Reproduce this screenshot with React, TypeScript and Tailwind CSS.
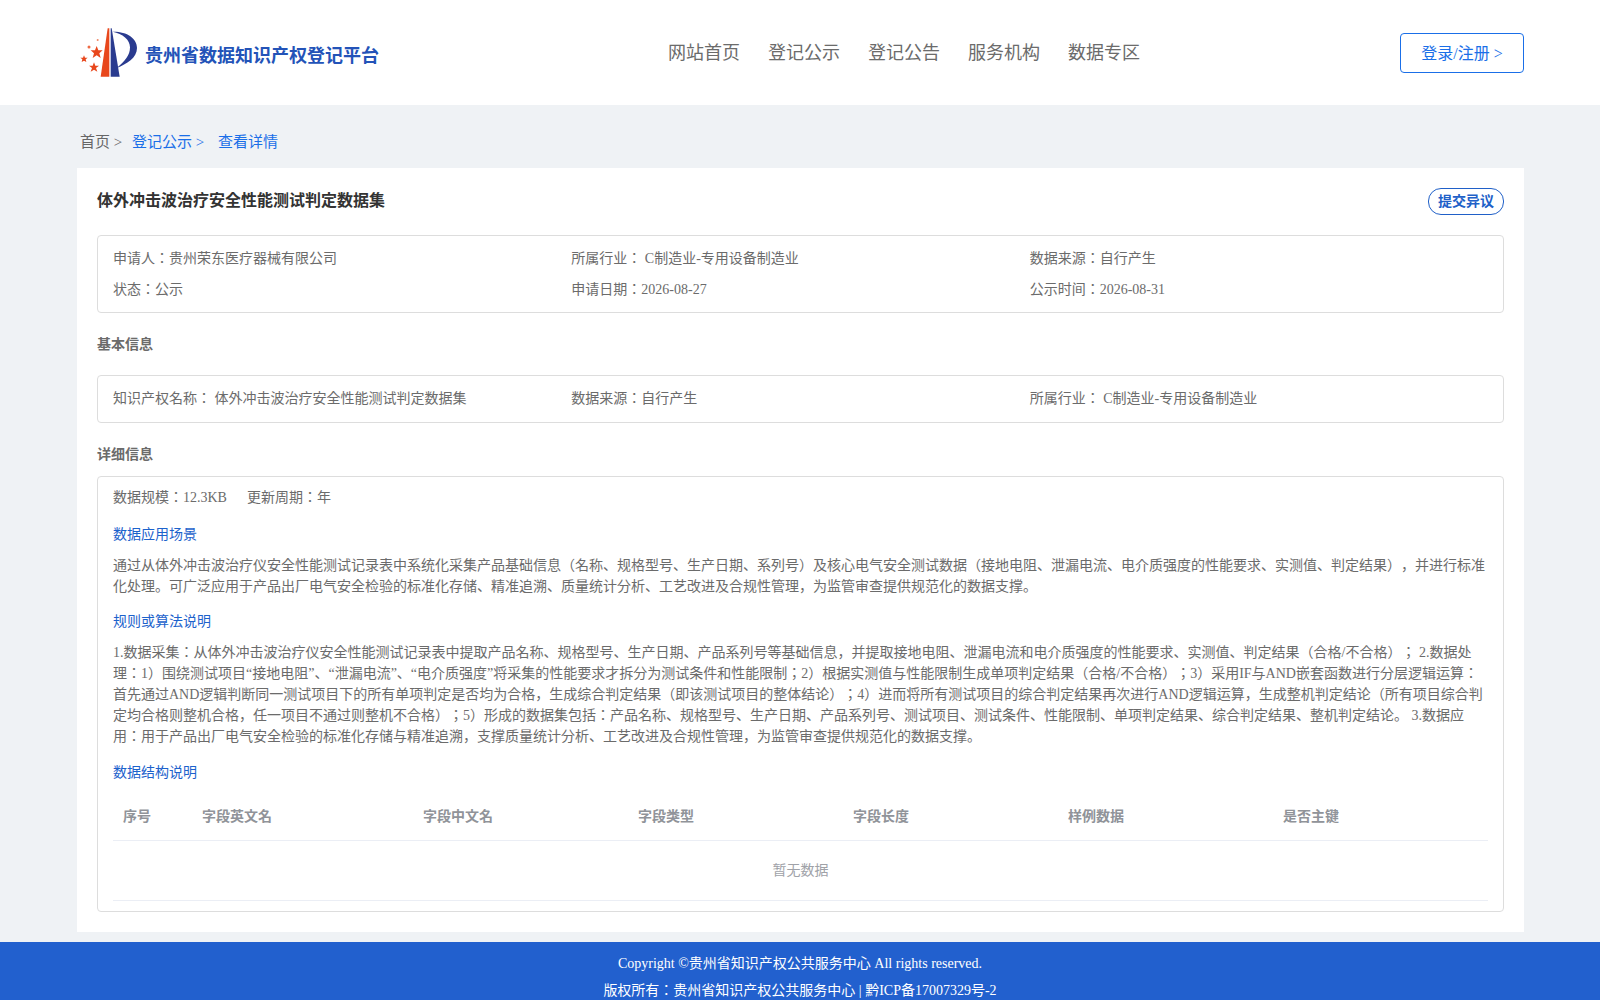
const cjk = "font-['Liberation_Serif','Noto_Sans_CJK_JP',serif] [text-spacing-trim:space-all]";

const nav = ["网站首页", "登记公示", "登记公告", "服务机构", "数据专区"];
const cols: [string, string][] = [
  ["序号", "w-[79px]"],
  ["字段英文名", "w-[221px]"],
  ["字段中文名", "w-[215px]"],
  ["字段类型", "w-[215px]"],
  ["字段长度", "w-[215px]"],
  ["样例数据", "w-[215px]"],
  ["是否主键", "w-[215px]"],
];

function Logo() {
  return (
    <svg viewBox="30 20 180 160" width={60} height={53.33} className="shrink-0">
      <polygon points="113,27 118,27 118,172 92,172" fill="#e8471c" />
      <polygon points="122,27 125,27 149,172 122,172" fill="#2a3b8f" />
      <path d="M128,37 C170,36 201,56 201,86 C201,116 170,134 140,146 C165,126 180,108 180,84 C180,60 158,44 128,37 Z" fill="#2a3b8f" />
      <polygon points="80,80 85,93 98,93 88,102 92,116 80,108 68,116 72,102 62,93 75,93" fill="#e8471c" />
      <polygon points="72,129 76,139 87,139 78,146 82,157 72,151 62,157 66,146 57,139 68,139" fill="#e8471c" />
      <polygon points="42,108 45,115 53,115 47,120 49,128 42,124 35,128 37,120 31,115 39,115" fill="#e8471c" />
      <circle cx="57" cy="83" r="4.5" fill="#ee6a44" />
      <circle cx="83" cy="62" r="3" fill="#ee8a6a" />
    </svg>
  );
}

function Heading({ children }: { children: React.ReactNode }) {
  return <div className="text-[14px] leading-[21px] text-[#1c62cc]">{children}</div>;
}

export default function App() {
  return (
    <div className={`${cjk} h-[1000px] overflow-hidden bg-[#eff2f5] text-[14px] text-[#6b6b6b]`}>
      <header className="flex h-[105px] items-center bg-white pl-[80px] pr-[76px]">
        <Logo />
        <div className="ml-[5px] mt-[6px] text-[18px] font-bold leading-[26px] text-[#2353b8]">贵州省数据知识产权登记平台</div>
        <nav className="ml-[289px] flex gap-[28px] text-[18px] leading-[26px] text-[#6b6b6b]">
          {nav.map((n) => (
            <span key={n}>{n}</span>
          ))}
        </nav>
        <button className="ml-auto h-[40px] w-[124px] rounded-[4px] border border-[#1a6fe8] pt-[2px] text-[16px] text-[#1a6fe8]">登录/注册 &gt;</button>
      </header>

      <div className="flex h-[63px] items-center pl-[80px] pt-[12px] text-[15px]">
        <span className="w-[52px] text-[#666666]">首页 &gt;</span>
        <span className="w-[86px] text-[#1a6fe8]">登记公示 &gt;</span>
        <span className="text-[#1a6fe8]">查看详情</span>
      </div>

      <main className="ml-[77px] h-[764px] w-[1447px] bg-white px-[20px] pt-[20px]">
        <div className="flex h-[27px] items-center justify-between">
          <h1 className="mb-[2px] text-[16px] font-bold text-[#333333]">体外冲击波治疗安全性能测试判定数据集</h1>
          <button className="h-[27px] w-[76px] rounded-[13px] border border-[#2060c8] text-[14px] font-bold text-[#2060c8]">提交异议</button>
        </div>

        <section className="mt-[20px] grid h-[78px] grid-cols-3 content-center gap-y-[10px] rounded-[4px] border border-[#dddddd] px-[15px] leading-[21px]">
          <div>申请人：贵州荣东医疗器械有限公司</div>
          <div>所属行业： C制造业-专用设备制造业</div>
          <div>数据来源：自行产生</div>
          <div>状态：公示</div>
          <div>申请日期：2026-08-27</div>
          <div>公示时间：2026-08-31</div>
        </section>

        <h2 className="mt-[21px] text-[14px] font-bold leading-[21px]">基本信息</h2>

        <section className="mt-[20px] grid h-[48px] grid-cols-3 items-center rounded-[4px] border border-[#dddddd] px-[15px] pb-[2px] leading-[21px]">
          <div>知识产权名称： 体外冲击波治疗安全性能测试判定数据集</div>
          <div>数据来源：自行产生</div>
          <div>所属行业： C制造业-专用设备制造业</div>
        </section>

        <h2 className="mt-[21px] text-[14px] font-bold leading-[21px]">详细信息</h2>

        <section className="mt-[11px] h-[436px] rounded-[4px] border border-[#dddddd] px-[15px] pt-[10px] leading-[21px]">
          <div className="flex gap-[20px]">
            <span>数据规模：12.3KB</span>
            <span>更新周期：年</span>
          </div>
          <div className="mt-[16px]">
            <Heading>数据应用场景</Heading>
          </div>
          <p className="mt-[10px]">
            通过从体外冲击波治疗仪安全性能测试记录表中系统化采集产品基础信息（名称、规格型号、生产日期、系列号）及核心电气安全测试数据（接地电阻、泄漏电流、电介质强度的性能要求、实测值、判定结果），并进行标准化处理。可广泛应用于产品出厂电气安全检验的标准化存储、精准追溯、质量统计分析、工艺改进及合规性管理，为监管审查提供规范化的数据支撑。
          </p>
          <div className="mt-[14px]">
            <Heading>规则或算法说明</Heading>
          </div>
          <p className="mt-[10px]">
            1.数据采集：从体外冲击波治疗仪安全性能测试记录表中提取产品名称、规格型号、生产日期、产品系列号等基础信息，并提取接地电阻、泄漏电流和电介质强度的性能要求、实测值、判定结果（合格/不合格）； 2.数据处理：1）围绕测试项目“接地电阻”、“泄漏电流”、“电介质强度”将采集的性能要求才拆分为测试条件和性能限制；2）根据实测值与性能限制生成单项判定结果（合格/不合格）；3）采用IF与AND嵌套函数进行分层逻辑运算：首先通过AND逻辑判断同一测试项目下的所有单项判定是否均为合格，生成综合判定结果（即该测试项目的整体结论）；4）进而将所有测试项目的综合判定结果再次进行AND逻辑运算，生成整机判定结论（所有项目综合判定均合格则整机合格，任一项目不通过则整机不合格）；5）形成的数据集包括：产品名称、规格型号、生产日期、产品系列号、测试项目、测试条件、性能限制、单项判定结果、综合判定结果、整机判定结论。 3.数据应用：用于产品出厂电气安全检验的标准化存储与精准追溯，支撑质量统计分析、工艺改进及合规性管理，为监管审查提供规范化的数据支撑。
          </p>
          <div className="mt-[15px]">
            <Heading>数据结构说明</Heading>
          </div>
          <table className="mt-[9px] w-[1375px] table-fixed border-collapse">
            <thead>
              <tr className="h-[48px] border-b border-[#ebeef5]">
                {cols.map(([t, w]) => (
                  <th key={t} className={`${w} px-[10px] pt-[2px] text-left text-[14px] font-bold text-[#909399]`}>
                    {t}
                  </th>
                ))}
              </tr>
            </thead>
            <tbody>
              <tr className="h-[60px] border-b border-[#ebeef5]">
                <td colSpan={7} className="text-center text-[#a0a2a8]">
                  暂无数据
                </td>
              </tr>
            </tbody>
          </table>
        </section>
      </main>

      <footer className="mt-[10px] bg-[#2260ce] pt-[8px] text-center leading-[27px] text-white">
        <div>Copyright ©贵州省知识产权公共服务中心 All rights reserved.</div>
        <div>版权所有：贵州省知识产权公共服务中心 | 黔ICP备17007329号-2</div>
      </footer>
    </div>
  );
}
